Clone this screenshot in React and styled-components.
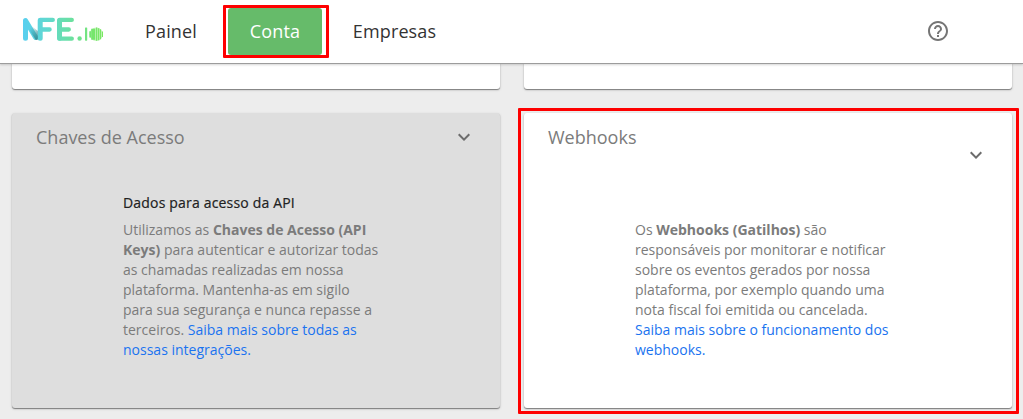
import React from "react";
import styled, { createGlobalStyle } from "styled-components";

const GlobalStyle = createGlobalStyle`
  *, *::before, *::after { box-sizing: border-box; }
  body {
    margin: 0;
    background: #ededed;
    font-family: "Open Sans", "Noto Sans", sans-serif;
    overflow: hidden;
  }
`;

const Page = styled.div`
  height: 419px;
  display: flex;
  flex-direction: column;
  overflow: hidden;
`;

const Header = styled.header`
  position: relative;
  z-index: 1;
  flex: none;
  height: 63px;
  padding: 0 73px 0 23px;
  display: flex;
  align-items: center;
  background: #fff;
  box-shadow: 0 1px 0 #9c9c9c, 0 2px 2px rgba(0, 0, 0, 0.16);
`;

const Logo = styled.svg`
  display: block;
  width: 81px;
  height: 25px;
  margin-right: 18px;
  margin-bottom: 4px;
`;

const Nav = styled.nav`
  display: flex;
  align-items: center;
  gap: 8px;
  flex: 1;
`;

const NavItem = styled.a`
  position: relative;
  width: ${(p) => p.$width}px;
  height: 47px;
  border-radius: 3px;
  font-size: 18px;
  line-height: 47px;
  letter-spacing: 0.14px;
  text-align: center;
  color: ${(p) => (p.$active ? "#fff" : "#333")};
  background: ${(p) => (p.$active ? "#66bb6a" : "transparent")};
`;

const Highlight = styled.span`
  position: absolute;
  inset: ${(p) => p.$inset};
  border: 3px solid #fe0000;
  border-radius: 1px;
  pointer-events: none;
`;

const HelpIcon = styled.svg`
  display: block;
  width: 24px;
  height: 24px;
  margin-bottom: 1px;
  fill: #757575;
`;

const Grid = styled.main`
  display: grid;
  grid-template-columns: 488px 488px;
  grid-template-rows: 26px 295px;
  gap: 24px;
  padding: 0 11px 0 12px;
`;

const Card = styled.section`
  position: relative;
  background: ${(p) => (p.$muted ? "#dedede" : "#fff")};
  border-radius: ${(p) => (p.$cut ? "0 0 3px 3px" : "3px")};
  box-shadow: 0 1px 1px rgba(0, 0, 0, 0.4), 0 1px 3px rgba(0, 0, 0, 0.16);
`;

const CardHeader = styled.div`
  display: flex;
  justify-content: space-between;
  padding: 0 24px;
  height: 77px;
`;

const CardTitle = styled.h2`
  margin: 12px 0 0;
  font-size: 18px;
  line-height: 25px;
  font-weight: 400;
  color: #7b7b7b;
`;

const Chevron = styled.svg`
  display: block;
  width: 24px;
  height: 24px;
  margin-top: ${(p) => p.$top}px;
  fill: #6c6c6c;
`;

const CardBody = styled.div`
  width: 262px;
  margin-left: 111px;
  font-size: 14px;
  line-height: 20px;
  color: #7b7b7b;
`;

const Subtitle = styled.h3`
  margin: 0;
  height: 30px;
  padding-top: 3px;
  font-size: 14px;
  line-height: 20px;
  font-weight: 500;
  letter-spacing: 0.18px;
  -webkit-text-stroke: 0.2px #212121;
  color: #212121;
`;

const Text = styled.p`
  margin: 0;
  white-space: nowrap;
`;

const Link = styled.a`
  color: #1a73f0;
`;

const BrandLogo = () => (
  <Logo viewBox="0 0 81 25" fill="none" aria-label="NFE.io">
    <defs>
      <linearGradient id="brand" gradientUnits="userSpaceOnUse" x1="0" y1="0" x2="81" y2="0">
        <stop offset="0" stopColor="#58cff0" />
        <stop offset="0.3" stopColor="#61d8cf" />
        <stop offset="0.6" stopColor="#6be0a0" />
        <stop offset="1" stopColor="#7be95c" />
      </linearGradient>
      <linearGradient id="fold" gradientUnits="userSpaceOnUse" x1="7" y1="11" x2="15" y2="20">
        <stop offset="0" stopColor="#398c96" stopOpacity="0" />
        <stop offset="1" stopColor="#398c96" stopOpacity="0.9" />
      </linearGradient>
    </defs>
    <g stroke="url(#brand)" strokeLinecap="round" strokeLinejoin="round">
      <path strokeWidth="5" d="M2.5 21.2V3.5L12.6 20.4M17.2 21.2V3.4M36.5 21.2V3.4" />
      <path strokeWidth="4.3" d="M17.2 2.9H29.8M17.2 12.5H26.6M36.6 2.9H48.8M36.6 12.5H45.8M36.6 21.7H48.8" />
    </g>
    <path d="M7.5 8L14.8 14V22.8L12.8 23L6.5 13Z" fill="url(#fold)" />
    <g fill="url(#brand)">
      <circle cx="56.6" cy="21.5" r="2.2" />
      <rect x="62" y="10.5" width="2.2" height="13.2" rx="0.6" />
      <path d="M66.3 14.2H68V20.4H66.3ZM68.2 11.8H72.2V22.8H68.2ZM73 10.6H74.3V23.8H73ZM75 11.2H76.3V23.2H75ZM77 12.2H78.1V22.2H77ZM79 14.4H80V20H79Z" />
    </g>
    <circle cx="73.2" cy="17.2" r="6.7" fill="#78e765" fillOpacity="0.45" />
  </Logo>
);

const ChevronDown = ({ top }) => (
  <Chevron viewBox="0 0 24 24" $top={top}>
    <path d="M16.59 8.59L12 13.17 7.41 8.59 6 10l6 6 6-6z" />
  </Chevron>
);

export default function App() {
  return (
    <Page>
      <GlobalStyle />
      <Header>
        <BrandLogo />
        <Nav>
          <NavItem $width={98}>Painel</NavItem>
          <NavItem $width={94} $active>
            Conta
            <Highlight $inset="-3px -7px -3px -5px" />
          </NavItem>
          <NavItem $width={129}>Empresas</NavItem>
        </Nav>
        <HelpIcon viewBox="0 0 24 24">
          <path d="M11 18h2v-2h-2v2zm1-16C6.48 2 2 6.48 2 12s4.48 10 10 10 10-4.480 10-10S17.520 2 12 2zm0 18c-4.410 0-8-3.590-8-8s3.590-8 8-8 8 3.590 8 8-3.590 8-8 8zm0-14c-2.210 0-4 1.790-4 4h2c0-1.100.9-2 2-2s2 .9 2 2c0 2-3 1.750-3 5h2c0-2.250 3-2.500 3-5 0-2.210-1.790-4-4-4z" />
        </HelpIcon>
      </Header>
      <Grid>
        <Card $cut />
        <Card $cut />
        <Card $muted>
          <CardHeader>
            <CardTitle>Chaves de Acesso</CardTitle>
            <ChevronDown top={12} />
          </CardHeader>
          <CardBody>
            <Subtitle>Dados para acesso da API</Subtitle>
            <Text>
              Utilizamos as <b>Chaves de Acesso (API</b><br />
              <b>Keys)</b> para autenticar e autorizar todas<br />
              as chamadas realizadas em nossa<br />
              plataforma. Mantenha-as em sigilo<br />
              para sua segurança e nunca repasse a<br />
              terceiros. <Link>Saiba mais sobre todas as<br />
              nossas integrações.</Link>
            </Text>
          </CardBody>
        </Card>
        <Card>
          <CardHeader>
            <CardTitle>Webhooks</CardTitle>
            <ChevronDown top={30} />
          </CardHeader>
          <CardBody>
            <Subtitle />
            <Text>
              Os <b>Webhooks (Gatilhos)</b> são<br />
              responsáveis por monitorar e notificar<br />
              sobre os eventos gerados por nossa<br />
              plataforma, por exemplo quando uma<br />
              nota fiscal foi emitida ou cancelada.<br />
              <Link>Saiba mais sobre o funcionamento dos<br />
              webhooks.</Link>
            </Text>
          </CardBody>
          <Highlight $inset="-5px -7px -6px -6px" />
        </Card>
      </Grid>
    </Page>
  );
}
